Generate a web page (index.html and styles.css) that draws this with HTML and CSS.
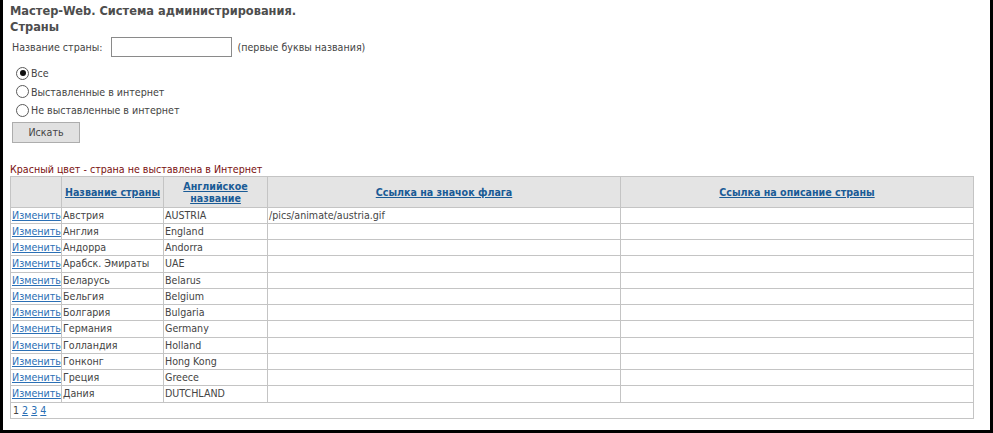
FILE: index.html
```html
<!DOCTYPE html>
<html lang="ru">
<head>
<meta charset="utf-8">
<title>Страны</title>
<link rel="stylesheet" href="styles.css">
</head>
<body>
<div class="frame">
  <h1 class="title">Мастер-Web. Система администрирования.<br>Страны</h1>
  <form class="filter">
    <div class="name-row">
      <label class="lbl" for="country">Название страны:</label>
      <input class="name-input" id="country" type="text">
      <span class="hint">(первые буквы названия)</span>
    </div>
    <div class="radios">
      <label class="radio"><input type="radio" name="f" checked><span>Все</span></label>
      <label class="radio"><input type="radio" name="f"><span>Выставленные в интернет</span></label>
      <label class="radio"><input type="radio" name="f"><span>Не выставленные в интернет</span></label>
    </div>
    <button class="btn" type="button">Искать</button>
  </form>
  <p class="note">Красный цвет - страна не выставлена в Интернет</p>
  <table class="grid">
    <colgroup>
      <col class="c1"><col class="c2"><col class="c3"><col class="c4"><col class="c5">
    </colgroup>
    <thead>
      <tr>
        <th></th>
        <th><a href="#">Название страны</a></th>
        <th><a href="#">Английское название</a></th>
        <th><a href="#">Ссылка на значок флага</a></th>
        <th><a href="#">Ссылка на описание страны</a></th>
      </tr>
    </thead>
    <tbody>
      <tr><td><a href="#">Изменить</a></td><td>Австрия</td><td>AUSTRIA</td><td>/pics/animate/austria.gif</td><td></td></tr>
      <tr><td><a href="#">Изменить</a></td><td>Англия</td><td>England</td><td></td><td></td></tr>
      <tr><td><a href="#">Изменить</a></td><td>Андорра</td><td>Andorra</td><td></td><td></td></tr>
      <tr><td><a href="#">Изменить</a></td><td>Арабск. Эмираты</td><td>UAE</td><td></td><td></td></tr>
      <tr><td><a href="#">Изменить</a></td><td>Беларусь</td><td>Belarus</td><td></td><td></td></tr>
      <tr><td><a href="#">Изменить</a></td><td>Бельгия</td><td>Belgium</td><td></td><td></td></tr>
      <tr><td><a href="#">Изменить</a></td><td>Болгария</td><td>Bulgaria</td><td></td><td></td></tr>
      <tr><td><a href="#">Изменить</a></td><td>Германия</td><td>Germany</td><td></td><td></td></tr>
      <tr><td><a href="#">Изменить</a></td><td>Голландия</td><td>Holland</td><td></td><td></td></tr>
      <tr><td><a href="#">Изменить</a></td><td>Гонконг</td><td>Hong Kong</td><td></td><td></td></tr>
      <tr><td><a href="#">Изменить</a></td><td>Греция</td><td>Greece</td><td></td><td></td></tr>
      <tr><td><a href="#">Изменить</a></td><td>Дания</td><td>DUTCHLAND</td><td></td><td></td></tr>
      <tr class="pager"><td colspan="5">1 <a href="#">2</a> <a href="#">3</a> <a href="#">4</a></td></tr>
    </tbody>
  </table>
</div>
</body>
</html>
```
FILE: styles.css
```css
html, body {
  margin: 0;
  padding: 0;
  background: #000;
}
body {
  width: 993px;
  height: 433px;
  overflow: hidden;
}
.frame {
  box-sizing: border-box;
  width: 987px;
  height: 430px;
  margin: 0 3px;
  background: #fff;
  padding: 3px 0 0 7px;
  font-family: "DejaVu Sans Condensed", "DejaVu Sans", sans-serif;
  font-size: 10.6px;
  color: #444;
}
.title {
  margin: 0;
  font-size: 12.7px;
  line-height: 16px;
  font-weight: bold;
  color: #4d4d4d;
}
.filter {
  margin: 0;
  padding-left: 2px;
}
.name-row {
  display: flex;
  align-items: center;
  gap: 6px;
  margin-top: 2px;
  height: 20px;
}
.lbl { margin-right: 2px; }
.name-input {
  box-sizing: border-box;
  width: 121px;
  height: 20px;
  border: 1px solid #8a8a8a;
  margin: 0;
  padding: 0 2px;
}
.radios {
  display: flex;
  flex-direction: column;
  margin-top: 7px;
  padding-left: 4px;
}
.radio {
  display: flex;
  align-items: center;
  height: 18.5px;
}
.radio input {
  appearance: none;
  -webkit-appearance: none;
  box-sizing: border-box;
  margin: 0 2px 0 0;
  width: 13px;
  height: 13px;
  border: 1px solid #5a5a5a;
  border-radius: 50%;
  background: #fff;
  display: grid;
  place-items: center;
}
.radio input:checked::before {
  content: "";
  width: 6px;
  height: 6px;
  border-radius: 50%;
  background: #111;
}
.btn {
  display: block;
  box-sizing: border-box;
  width: 68px;
  height: 21px;
  margin-top: 2px;
  background: #e1e1e1;
  border: 1px solid #adadad;
  font: inherit;
  color: #444;
  padding: 0;
}
.note {
  margin: 20px 0 0;
  line-height: 13px;
  color: #7a1010;
}
.grid {
  border-collapse: collapse;
  table-layout: fixed;
  width: 964px;
  border: 1px solid #c4c4c4;
}
.c1 { width: 51px; }
.c2 { width: 102px; }
.c3 { width: 104px; }
.c4 { width: 353px; }
.c5 { width: 353px; }
.grid th {
  background: #e4e4e4;
  border: 1px solid #c4c4c4;
  height: 30px;
  padding: 0 2px;
  line-height: 12px;
  font-weight: bold;
  text-align: center;
  vertical-align: middle;
}
.grid th a { color: #1a5b96; }
.grid td {
  border: 1px solid #c4c4c4;
  height: 15.25px;
  padding: 0 1px;
  line-height: 13px;
  white-space: nowrap;
  overflow: hidden;
  vertical-align: middle;
}
.grid td a { color: #2a6fb5; }
.grid .pager td { padding-left: 2px; }
.grid .pager a { color: #2a6fb5; }
```
